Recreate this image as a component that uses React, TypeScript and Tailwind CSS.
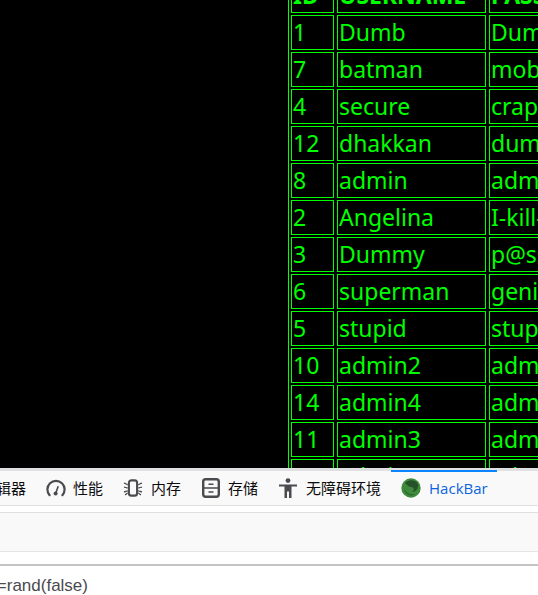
const rows: [string, string, string][] = [
  ["1", "Dumb", "Dumb"],
  ["7", "batman", "mobile!"],
  ["4", "secure", "crappy"],
  ["12", "dhakkan", "dumbo"],
  ["8", "admin", "admin"],
  ["2", "Angelina", "I-kill-you"],
  ["3", "Dummy", "p@ssword"],
  ["6", "superman", "genious"],
  ["5", "stupid", "stupidity"],
  ["10", "admin2", "admin2"],
  ["14", "admin4", "admin4"],
  ["11", "admin3", "admin3"],
  ["9", "admin1", "admin1"],
];

const cell = "border border-[#00ff00] p-0 pl-[1px] h-[35px] leading-[33px] whitespace-nowrap text-left align-top";

function Gauge() {
  return (
    <svg width="20" height="20" viewBox="0 0 20 20" fill="none" stroke="#4a4a4f">
      <path d="M3.6 17.2A8.6 8.6 0 1 1 16.4 17.2" strokeWidth="2.2" strokeLinecap="round" />
      <circle cx="9.6" cy="15.4" r="2" fill="#4a4a4f" stroke="none" />
      <path d="M9.8 15L12.2 8.2" strokeWidth="1.6" />
    </svg>
  );
}

function Chip() {
  return (
    <svg width="20" height="20" viewBox="0 0 21 20" fill="none" stroke="#4a4a4f">
      <rect x="6.2" y="2" width="8.6" height="16" rx="2.6" strokeWidth="2.2" />
      <path d="M1 5c2 0 2.500 1.500 4 1.500M1 9c1.500 0 2.500 1 4 1M1 14c1.500 0 2.500-1 4-1M2 17c1 0 2-1.500 3-1.500M20 5c-2 0-2.500 1.500-4 1.500M20 9c-1.500 0-2.500 1-4 1M20 14c-1.500 0-2.500-1-4-1M19 17c-1 0-2-1.500-3-1.500" strokeWidth="1.3" />
    </svg>
  );
}

function Storage() {
  return (
    <svg width="18" height="20" viewBox="0 0 18 20" fill="none" stroke="#4a4a4f">
      <rect x="1.200" y="1.200" width="15.600" height="17.600" rx="2.500" strokeWidth="2.400" />
      <path d="M1.500 10H16.500M6.500 6.200H11.500M6.500 14H11.500" strokeWidth="1.600" />
    </svg>
  );
}

function Person() {
  return (
    <svg width="18" height="20" viewBox="0 0 18 20" fill="#4a4a4f">
      <circle cx="9" cy="2.600" r="2.400" />
      <path d="M0 6.500H18V8.500H12.500V20H10V13.500H8V20H5.500V8.500H0Z" />
    </svg>
  );
}

function Hack() {
  return (
    <svg width="20" height="20" viewBox="0 0 20 20">
      <circle cx="10" cy="10" r="9.700" fill="#3f8a3a" />
      <path d="M4 5C8 1 15 1.500 17 6C18 10 15 14 11 14C14 12 13 9 10 9C8 9 7 7.500 4 5Z" fill="#24532a" />
      <path d="M3 10C5 15 9 17 14 16C11 19 4 18 3 10Z" fill="#2b6a30" />
    </svg>
  );
}

function Tab({ icon, label, className }: { icon: React.ReactNode; label: string; className: string }) {
  return (
    <div className={`flex items-center shrink-0 ${className}`}>
      {icon}
      <span className="text-[15px] text-[#0c0c0d] whitespace-nowrap">{label}</span>
    </div>
  );
}

export default function App() {
  return (
    <div className="w-[538px] h-[595px] overflow-hidden bg-white flex flex-col font-['Liberation_Sans',sans-serif]">
      <div className="h-[468px] shrink-0 bg-black overflow-hidden pl-[288px]">
        <div className="h-full flow-root overflow-hidden border-l border-[#00ff00]">
          <table
            className="-mt-[24px] -ml-[1px] w-[400px] table-fixed border-separate [border-spacing:3px_2px] text-[#00ff00] text-[23px] font-['Noto_Sans',sans-serif]"
          >
            <thead>
              <tr>
                <th className={`${cell} w-[43px]`}>ID</th>
                <th className={`${cell} w-[149px]`}>USERNAME</th>
                <th className={cell}>PASSWORD</th>
              </tr>
            </thead>
            <tbody>
              {rows.map((r) => (
                <tr key={r[0]}>
                  {r.map((v, i) => (
                    <td key={i} className={cell}>{v}</td>
                  ))}
                </tr>
              ))}
            </tbody>
          </table>
        </div>
      </div>

      <div className="relative shrink-0 h-[3px] bg-[#e0e0e2]">
        <div className="absolute left-[391px] top-[2px] w-[106px] h-[2px] bg-[#0a84ff]" />
      </div>

      <div className="h-[35px] shrink-0 bg-[#f9f9fa] border-b border-[#e0e0e2] flex items-center whitespace-nowrap font-['Noto_Sans_CJK_SC',sans-serif]">
        <span className="-ml-[19px] w-[65px] shrink-0 text-[15px] text-[#0c0c0d]">编辑器</span>
        <Tab icon={<Gauge />} label="性能" className="gap-[7px] mr-[20px]" />
        <Tab icon={<Chip />} label="内存" className="gap-[8px] mr-[21px]" />
        <Tab icon={<Storage />} label="存储" className="gap-[8px] mr-[21px]" />
        <Tab icon={<Person />} label="无障碍环境" className="gap-[9px] mr-[20px]" />
        <div className="flex items-center gap-[8px] shrink-0">
          <Hack />
          <span className="text-[15px] text-[#0a64e0] font-['Open_Sans',sans-serif]">HackBar</span>
        </div>
      </div>

      <div className="h-[7px] shrink-0 bg-white border-b border-[#e0e0e2]" />
      <div className="h-[39px] shrink-0 bg-[#f9f9fa] border-b border-[#e4e4e6]" />
      <div className="h-[14px] shrink-0 bg-white border-b-2 border-[#c4c4c4]" />
      <div className="flex-1 bg-white flex items-center overflow-hidden pt-[10px]">
        <span className="-ml-[41px] text-[17px] text-[#4a4a4f] whitespace-nowrap">?sort=rand(false)</span>
      </div>
    </div>
  );
}
